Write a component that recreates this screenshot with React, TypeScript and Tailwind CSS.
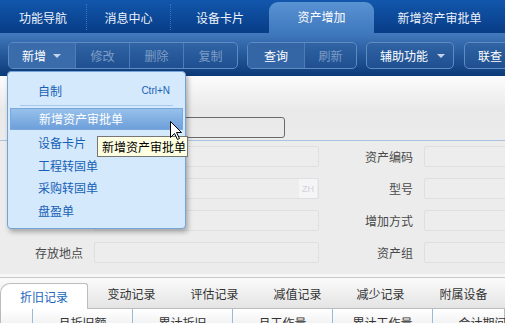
import React from "react";

const topTabs = [
  { label: "功能导航", w: "w-[86px]" },
  { label: "消息中心", w: "w-[83px]" },
];

const ToolBtn = ({ label, w, on, first, arrow, extra }: { label: string; w: string; on?: boolean; first?: boolean; arrow?: boolean; extra?: string }) => (
  <div
    className={`${w} shrink-0 h-full flex items-center ${arrow ? "pl-[13px] gap-[7px]" : "justify-center"} ${first ? "" : "border-l border-[#4e7cb6]"} ${on ? "text-white" : "text-[#7d9dc6]"} ${extra ?? ""}`}
  >
    <span>{label}</span>
    {arrow && <span className="w-0 h-0 border-x-[4px] border-x-transparent border-t-[4px] border-t-[#c3d4ea] mt-[1px]" />}
  </div>
);

const FormRow = ({ left, right, zh }: { left: string; right: string; zh?: boolean }) => (
  <div className="flex items-center h-[21px]">
    <div className="w-[83px] shrink-0 text-right text-[#4a4a4a]">{left}</div>
    <div className="ml-[11px] w-[225px] shrink-0 h-[21px] rounded-[2px] border border-[#dfdfdf] bg-[#ededed] flex justify-end items-center pr-[1px]">
      {zh && <div className="w-[18px] h-[19px] bg-[#f5f5f7] text-[9px] text-[#d2d2da] flex items-center justify-center font-['Liberation_Sans',sans-serif]">ZH</div>}
    </div>
    <div className="w-[94px] shrink-0 text-right text-[#4a4a4a]">{right}</div>
    <div className="ml-[11px] w-[90px] h-[21px] rounded-[2px] border border-[#dfdfdf] bg-[#ededed] shrink-0" />
  </div>
);

const menuItems = ["设备卡片", "工程转固单", "采购转固单", "盘盈单"];
const bottomTabs = ["变动记录", "评估记录", "减值记录", "减少记录", "附属设备"];
const cols = ["月折旧额", "累计折旧", "月工作量", "累计工作量", "会计期间"];

const group = "shrink-0 h-[27px] flex rounded-[5px] border border-[#5f8bc3] bg-gradient-to-b from-[#3064a4] to-[#1f4f90] overflow-hidden";

export default function App() {
  return (
    <div className="relative w-[505px] h-[323px] overflow-hidden bg-[#ececec] text-[12px] leading-[16px] font-['Noto_Sans_CJK_SC',sans-serif]">
      {/* top nav */}
      <div className="h-[33px] flex items-end bg-gradient-to-b from-[#1257ad] to-[#083c86] text-[#eef3fa]">
        {topTabs.map((t, i) => (
          <React.Fragment key={t.label}>
            <div className={`${t.w} h-full flex items-center justify-center pt-[3px]`}>{t.label}</div>
            {i < 2 && <div className="w-0 h-[26px] self-center border-l border-dotted border-[#3f73b9]" />}
          </React.Fragment>
        ))}
        <div className="w-[98px] h-full flex items-center justify-center pt-[3px]">设备卡片</div>
        <div className="w-[105px] h-[31px] rounded-t-[9px] bg-gradient-to-b from-[#5a93d3] to-[#3e78be] flex items-center justify-center pb-[1px] text-white">资产增加</div>
        <div className="flex-1 h-full flex items-center justify-center pt-[3px]">新增资产审批单</div>
      </div>

      {/* toolbar */}
      <div className="h-[43px] pt-[9px] pl-[8px] flex items-start gap-[9px] overflow-hidden bg-gradient-to-b from-[#427abe] via-[#25599b] to-[#0c3a78]">
        <div className={group}>
          <ToolBtn label="新增" w="w-[66px]" on first arrow extra="bg-[#3a6cab]" />
          <ToolBtn label="修改" w="w-[54px]" />
          <ToolBtn label="删除" w="w-[54px]" />
          <ToolBtn label="复制" w="w-[54px]" />
        </div>
        <div className={group}>
          <ToolBtn label="查询" w="w-[56px]" on first extra="bg-[#3466a6]" />
          <ToolBtn label="刷新" w="w-[52px]" />
        </div>
        <div className={group}>
          <ToolBtn label="辅助功能" w="w-[86px]" on first arrow extra="pl-[12px] gap-[9px]" />
        </div>
        <div className={`${group} ml-[1px]`}>
          <ToolBtn label="联查" w="w-[60px]" on first extra="justify-start pl-[13px]" />
        </div>
      </div>

      {/* search strip */}
      <div className="h-[65px] pt-[41px] border-b border-[#a9c3e0] bg-[linear-gradient(#fcfcfc,#e9e9e9_34px,#ebebeb)]">
        <div className="ml-[150px] w-[135px] h-[21px] rounded-[3px] border border-[#6a6a6a]" />
      </div>

      {/* form */}
      <div className="pt-[5px] pb-[11px] flex flex-col gap-[11px]">
        <FormRow left="" right="资产编码" />
        <FormRow left="" right="型号" zh />
        <FormRow left="" right="增加方式" />
        <FormRow left="存放地点" right="资产组" />
      </div>
      <div className="h-[3px] bg-[#f7f7f7]" />

      {/* bottom tabs */}
      <div className="h-[32px] flex items-end border-y border-[#bcbcbc] border-t-[#c9c9c9] bg-gradient-to-b from-[#fbfbfb] to-[#e4e4e4]">
        <div className="w-[88px] h-[26px] -mb-px bg-white border border-b-0 border-[#bdbdbd] rounded-tl-[10px] rounded-tr-[3px] flex items-center justify-center text-[#1a66bc]">折旧记录</div>
        <div className="flex pl-[2px] h-full items-center pt-[2px] text-[#333]">
          {bottomTabs.map((t) => (
            <div key={t} className="w-[83px] text-center">{t}</div>
          ))}
        </div>
      </div>

      {/* grid header */}
      <div className="h-[20px] flex border-x border-[#b9b9b9] bg-gradient-to-b from-white to-[#eeeeee] text-[#333]">
        <div className="w-[32px] border-r border-[#9db9da] shrink-0" />
        {cols.map((c) => (
          <div key={c} className="w-[100px] shrink-0 border-r border-[#9db9da] text-center pt-[6px]">{c}</div>
        ))}
      </div>

      {/* dropdown menu */}
      <div className="absolute left-[7px] top-[71px] w-[179px] h-[158px] rounded-[4px] border border-[#74a3d8] bg-[#d5e9fc] shadow-[2px_3px_5px_rgba(0,0,0,0.3)] text-[#1661b6]">
        <div className="mt-[8px] h-[22px] flex items-center justify-between pl-[30px] pr-[15px]">
          <span>自制</span>
          <span className="text-[10px] font-['Liberation_Sans',sans-serif]">Ctrl+N</span>
        </div>
        <div className="mx-[12px] mt-[3px] h-px bg-[#a8c9ec]" />
        <div className="mx-[2px] mt-[2px] h-[22px] flex items-center pl-[28px] text-white border border-[#7aa8dc] bg-gradient-to-b from-[#97c1eb] to-[#6d9fda]">新增资产审批单</div>
        <div className="mt-[2px] flex flex-col">
          {menuItems.map((m) => (
            <div key={m} className="h-[22.5px] flex items-center pl-[30px]">{m}</div>
          ))}
        </div>
      </div>

      {/* tooltip */}
      <div className="absolute left-[97px] top-[136px] w-[91px] h-[21px] border border-[#767676] bg-[#ffffe1] text-black pl-[4px] flex items-center">新增资产审批单</div>

      {/* cursor */}
      <svg className="absolute left-[170px] top-[121px]" width="13" height="20" viewBox="0 0 13 20">
        <path d="M0.5 0.5 L0.5 16.5 L4.5 12.5 L7.5 18.5 L9.5 17.5 L6.5 11.5 L11.5 11.5 Z" fill="white" stroke="black" strokeWidth="1" />
      </svg>
    </div>
  );
}
